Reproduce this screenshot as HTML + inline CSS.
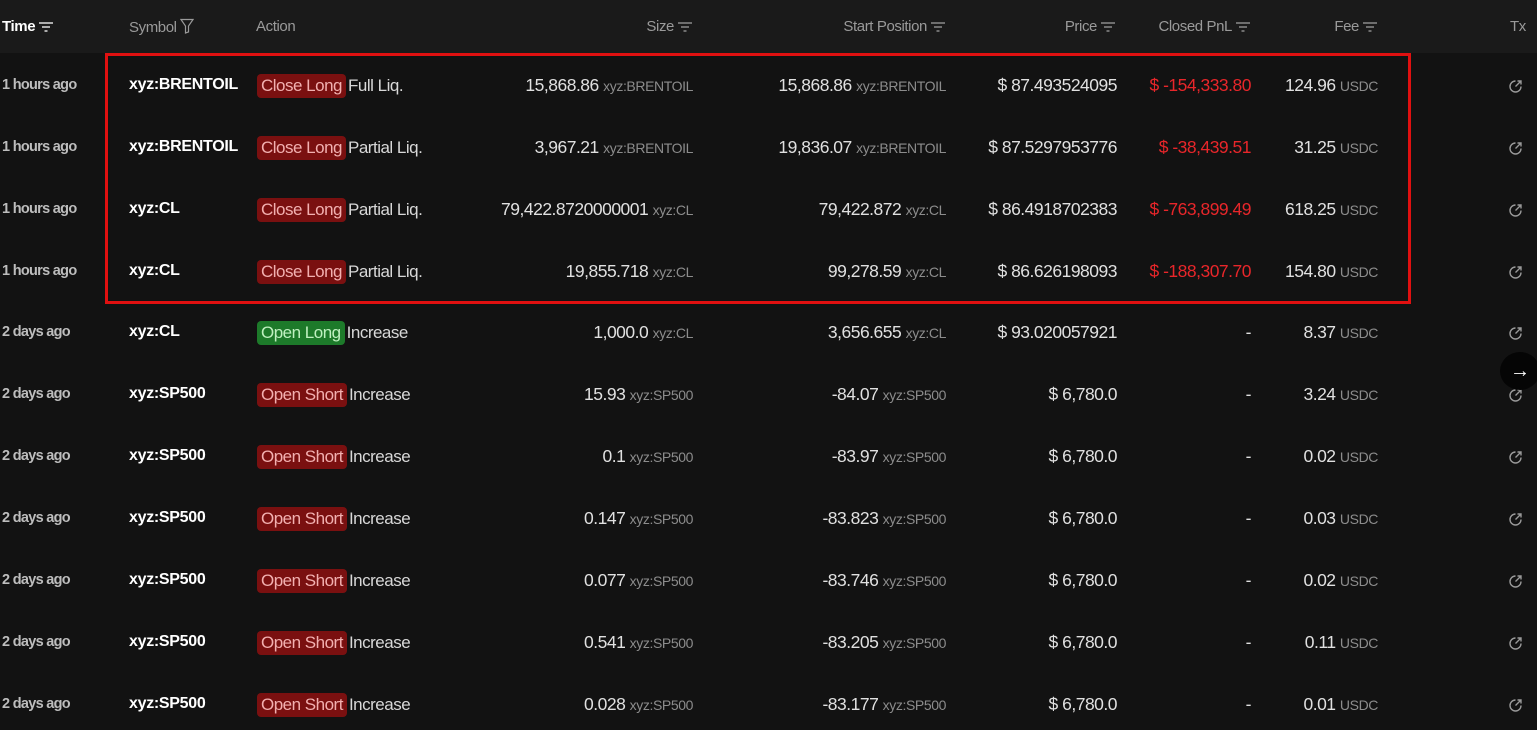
<!DOCTYPE html>
<html><head><meta charset="utf-8"><style>
*{margin:0;padding:0;box-sizing:border-box}
body{width:1537px;height:730px;background:#121212;font-family:"Liberation Sans",sans-serif;color:#e0e0e0;position:relative;overflow:hidden}
.hdr{position:absolute;left:0;top:0;width:1537px;height:53px;background:#1a1a1a}
.h{position:absolute;top:18px;font-size:15px;color:#9a9a9a;letter-spacing:-0.4px;white-space:nowrap}
.h svg{vertical-align:-2px;margin-left:3px}
.r{position:absolute;left:0;width:1537px;height:20px}
.c{position:absolute;top:0;white-space:nowrap;font-size:17.5px;letter-spacing:-0.5px}
.t{left:2px;font-size:14.5px;color:#bdbdbd;font-weight:bold;letter-spacing:-0.7px;top:1px}
.s{left:129px;font-weight:bold;color:#fff;font-size:16px;letter-spacing:-0.3px}
.a{left:257px;color:#d8d8d8;font-size:17px}
.b{display:inline-block;padding:2px 4px;border-radius:4px;margin-right:2px}
.cl{background:#7a1010;color:#f2b0b0}
.ol{background:#1d7a2a;color:#bff0c0}
.ra{text-align:right}
.u{font-size:14px;color:#8c8c8c;letter-spacing:-0.4px}
.red{color:#e8262a}
.tx{left:1507px;top:2px}
.box{position:absolute;left:105px;top:53px;width:1306px;height:251px;border:3px solid #e01010}
</style></head><body>
<div class="hdr"></div>
<div class="h" style="left:2px;color:#fff;font-weight:bold">Time<svg width="16" height="12"><path d="M1 2h14M4 6h8M6.5 10h3" stroke="#ddd" stroke-width="1.5"/></svg></div>
<div class="h" style="left:129px">Symbol <svg width="14" height="16" viewBox="0 0 14 16" style="margin-left:0"><path d="M1 1.5h12L8.5 8v6L5.5 15V8z" fill="none" stroke="#9a9a9a" stroke-width="1.2"/></svg></div>
<div class="h" style="left:256px">Action</div>
<div id="hh"></div>
<div class="h" style="left:1510px">Tx</div>
<div id="rows"></div>
<div class="box"></div>
<div style="position:absolute;left:1500px;top:352px;width:40px;height:38px;border-radius:50%;background:#050505;color:#fff;font-size:20px;line-height:38px;text-align:center">→</div>
<script>
const ic='<svg width="16" height="12"><path d="M1 2h14M4 6h8M6.5 10h3" stroke="#8a8a8a" stroke-width="1.5"/></svg>';
let hh="";[["Size",844],["Start Position",591],["Price",421],["Closed PnL",286],["Fee",159]].forEach(x=>{hh+=`<div class="h" style="right:${x[1]}px">${x[0]}${ic}</div>`});
document.getElementById("hh").innerHTML=hh;
const d=[
["1 hours ago","xyz:BRENTOIL","cl","Close Long","Full Liq.","15,868.86","xyz:BRENTOIL","15,868.86","xyz:BRENTOIL","$ 87.493524095","$ -154,333.80","124.96"],
["1 hours ago","xyz:BRENTOIL","cl","Close Long","Partial Liq.","3,967.21","xyz:BRENTOIL","19,836.07","xyz:BRENTOIL","$ 87.5297953776","$ -38,439.51","31.25"],
["1 hours ago","xyz:CL","cl","Close Long","Partial Liq.","79,422.8720000001","xyz:CL","79,422.872","xyz:CL","$ 86.4918702383","$ -763,899.49","618.25"],
["1 hours ago","xyz:CL","cl","Close Long","Partial Liq.","19,855.718","xyz:CL","99,278.59","xyz:CL","$ 86.626198093","$ -188,307.70","154.80"],
["2 days ago","xyz:CL","ol","Open Long","Increase","1,000.0","xyz:CL","3,656.655","xyz:CL","$ 93.020057921","-","8.37"],
["2 days ago","xyz:SP500","cl","Open Short","Increase","15.93","xyz:SP500","-84.07","xyz:SP500","$ 6,780.0","-","3.24"],
["2 days ago","xyz:SP500","cl","Open Short","Increase","0.1","xyz:SP500","-83.97","xyz:SP500","$ 6,780.0","-","0.02"],
["2 days ago","xyz:SP500","cl","Open Short","Increase","0.147","xyz:SP500","-83.823","xyz:SP500","$ 6,780.0","-","0.03"],
["2 days ago","xyz:SP500","cl","Open Short","Increase","0.077","xyz:SP500","-83.746","xyz:SP500","$ 6,780.0","-","0.02"],
["2 days ago","xyz:SP500","cl","Open Short","Increase","0.541","xyz:SP500","-83.205","xyz:SP500","$ 6,780.0","-","0.11"],
["2 days ago","xyz:SP500","cl","Open Short","Increase","0.028","xyz:SP500","-83.177","xyz:SP500","$ 6,780.0","-","0.01"]];
const ys=[75,137,199,261,322,384,446,508,570,632,694];
let h="";
const icon='<svg width="17" height="17" viewBox="0 0 17 17"><path d="M14 8.5A5.5 5.5 0 1 1 8.5 3" fill="none" stroke="#9a9a9a" stroke-width="1.4"/><path d="M8.5 8.5L14 3M10.5 3H14V6.5" fill="none" stroke="#9a9a9a" stroke-width="1.4"/></svg>';
d.forEach((r,i)=>{h+=`<div class="r" style="top:${ys[i]}px">
<div class="c t" style="top:2px">${r[0]}</div><div class="c s" style="top:1px">${r[1]}</div>
<div class="c a" style="top:-1px"><span class="b ${r[2]}">${r[3]}</span>${r[4]}</div>
<div class="c ra" style="right:844px">${r[5]} <span class="u">${r[6]}</span></div>
<div class="c ra" style="right:591px">${r[7]} <span class="u">${r[8]}</span></div>
<div class="c ra" style="right:420px">${r[9]}</div>
<div class="c ra ${r[10]=='-'?'':'red'}" style="right:286px">${r[10]}</div>
<div class="c ra" style="right:159px">${r[11]} <span class="u">USDC</span></div>
<div class="c tx" style="top:3px">${icon}</div></div>`});
document.getElementById("rows").innerHTML=h;
</script>
</body></html>
